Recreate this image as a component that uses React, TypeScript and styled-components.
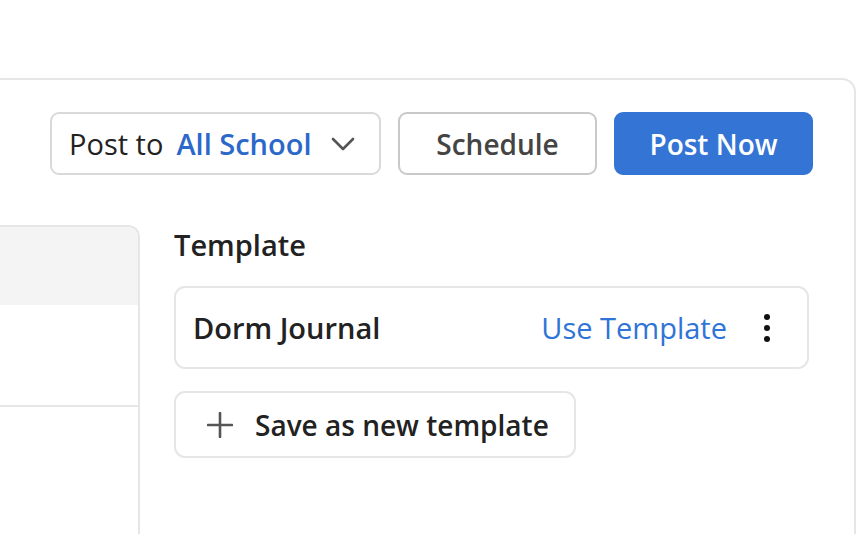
import React from 'react';
import styled, { createGlobalStyle } from 'styled-components';

const GlobalStyle = createGlobalStyle`
  html, body {
    margin: 0;
    padding: 0;
    background: #ffffff;
    overflow: hidden;
  }
  body {
    font-family: 'Open Sans', 'Noto Sans', sans-serif;
    color: #222222;
  }
`;

// 外层面板，左边延伸到窗口外
const Panel = styled.div`
  margin-top: 78px;
  margin-left: -20px;
  width: 876px;
  box-sizing: border-box;
  border-top: 2px solid #e6e6e6;
  border-right: 2px solid #e6e6e6;
  border-left: 2px solid #e6e6e6;
  border-top-right-radius: 14px;
  padding: 32px 41px 0 0;
`;

const Toolbar = styled.div`
  display: flex;
  justify-content: flex-end;
  gap: 17px;
`;

const Dropdown = styled.button`
  display: flex;
  align-items: center;
  width: 331px;
  height: 63px;
  box-sizing: border-box;
  padding: 0 24px 0 17px;
  border: 2px solid #d9d9d9;
  border-radius: 9px;
  background: #fff;
  font-family: inherit;
  font-size: 29px;
  color: #222;
  cursor: pointer;
`;

const DropdownLabel = styled.span`
  font-weight: 400;
`;

const DropdownValue = styled.span`
  margin-left: 13px;
  font-weight: 600;
  color: #2b68c9;
  flex: 1;
  text-align: left;
`;

const Button = styled.button<{ $primary?: boolean }>`
  width: 199px;
  height: 63px;
  box-sizing: border-box;
  border-radius: 9px;
  font-family: inherit;
  font-size: 28px;
  font-weight: 600;
  cursor: pointer;
  border: 2px solid ${(p) => (p.$primary ? '#3474d4' : '#c9c9c9')};
  background: ${(p) => (p.$primary ? '#3474d4' : '#fff')};
  color: ${(p) => (p.$primary ? '#fff' : '#444')};
`;

const Body = styled.div`
  display: grid;
  grid-template-columns: 1fr 635px;
  gap: 34px;
  margin-top: 50px;
  padding-right: 4px;
`;

// 左侧卡片
const LeftCard = styled.div`
  border: 2px solid #e6e6e6;
  border-left: none;
  border-bottom: none;
  border-top-right-radius: 12px;
  height: 340px;
  overflow: hidden;
`;

const CardHeader = styled.div`
  height: 78px;
  background: #f4f4f4;
`;

const CardSection = styled.div<{ $height: number }>`
  height: ${(p) => p.$height}px;
  background: #fff;
  border-bottom: 2px solid #e6e6e6;
  &:last-child {
    border-bottom: none;
  }
`;

const Side = styled.div`
  display: flex;
  flex-direction: column;
  align-items: flex-start;
`;

const Heading = styled.h3`
  margin: 0;
  font-size: 29px;
  line-height: 40px;
  font-weight: 600;
  color: #222;
`;

const TemplateRow = styled.div`
  margin-top: 21px;
  width: 100%;
  height: 83px;
  box-sizing: border-box;
  display: flex;
  align-items: center;
  padding: 0 30px 0 17px;
  border: 2px solid #e6e6e6;
  border-radius: 11px;
`;

const TemplateName = styled.span`
  flex: 1;
  font-size: 29px;
  font-weight: 600;
  color: #222;
`;

const LinkButton = styled.button`
  border: none;
  background: none;
  padding: 0;
  font-family: inherit;
  font-size: 29px;
  font-weight: 400;
  color: #2f74d6;
  cursor: pointer;
`;

const IconButton = styled.button`
  display: flex;
  align-items: center;
  justify-content: center;
  width: 20px;
  margin-left: 30px;
  border: none;
  background: none;
  padding: 0;
  cursor: pointer;
`;

const SaveButton = styled.button`
  margin-top: 22px;
  height: 67px;
  box-sizing: border-box;
  display: flex;
  align-items: center;
  gap: 22px;
  padding: 0 25px 0 31px;
  border: 2px solid #e6e6e6;
  border-radius: 11px;
  background: #fff;
  font-family: inherit;
  font-size: 28px;
  font-weight: 600;
  color: #222;
  cursor: pointer;
`;

const Chevron = () => (
  <svg width="24" height="14" viewBox="0 0 24 14" fill="none">
    <path d="M2 2l10 10L22 2" stroke="#555" strokeWidth="2.6" strokeLinecap="round" strokeLinejoin="round" />
  </svg>
);

const Kebab = () => (
  <svg width="8" height="30" viewBox="0 0 8 30">
    <circle cx="4" cy="4" r="3" fill="#111" />
    <circle cx="4" cy="15" r="3" fill="#111" />
    <circle cx="4" cy="26" r="3" fill="#111" />
  </svg>
);

const Plus = () => (
  <svg width="26" height="26" viewBox="0 0 26 26">
    <path d="M13 1v24M1 13h24" stroke="#555" strokeWidth="2.6" strokeLinecap="round" />
  </svg>
);

const App: React.FC = () => {
  return (
    <>
      <GlobalStyle />
      <Panel>
        <Toolbar>
          <Dropdown>
            <DropdownLabel>Post to</DropdownLabel>
            <DropdownValue>All School</DropdownValue>
            <Chevron />
          </Dropdown>
          <Button>Schedule</Button>
          <Button $primary>Post Now</Button>
        </Toolbar>

        <Body>
          <LeftCard>
            <CardHeader />
            <CardSection $height={100} />
            <CardSection $height={160} />
          </LeftCard>

          <Side>
            <Heading>Template</Heading>
            <TemplateRow>
              <TemplateName>Dorm Journal</TemplateName>
              <LinkButton>Use Template</LinkButton>
              <IconButton aria-label="More">
                <Kebab />
              </IconButton>
            </TemplateRow>
            <SaveButton>
              <Plus />
              Save as new template
            </SaveButton>
          </Side>
        </Body>
      </Panel>
    </>
  );
};

export default App;
